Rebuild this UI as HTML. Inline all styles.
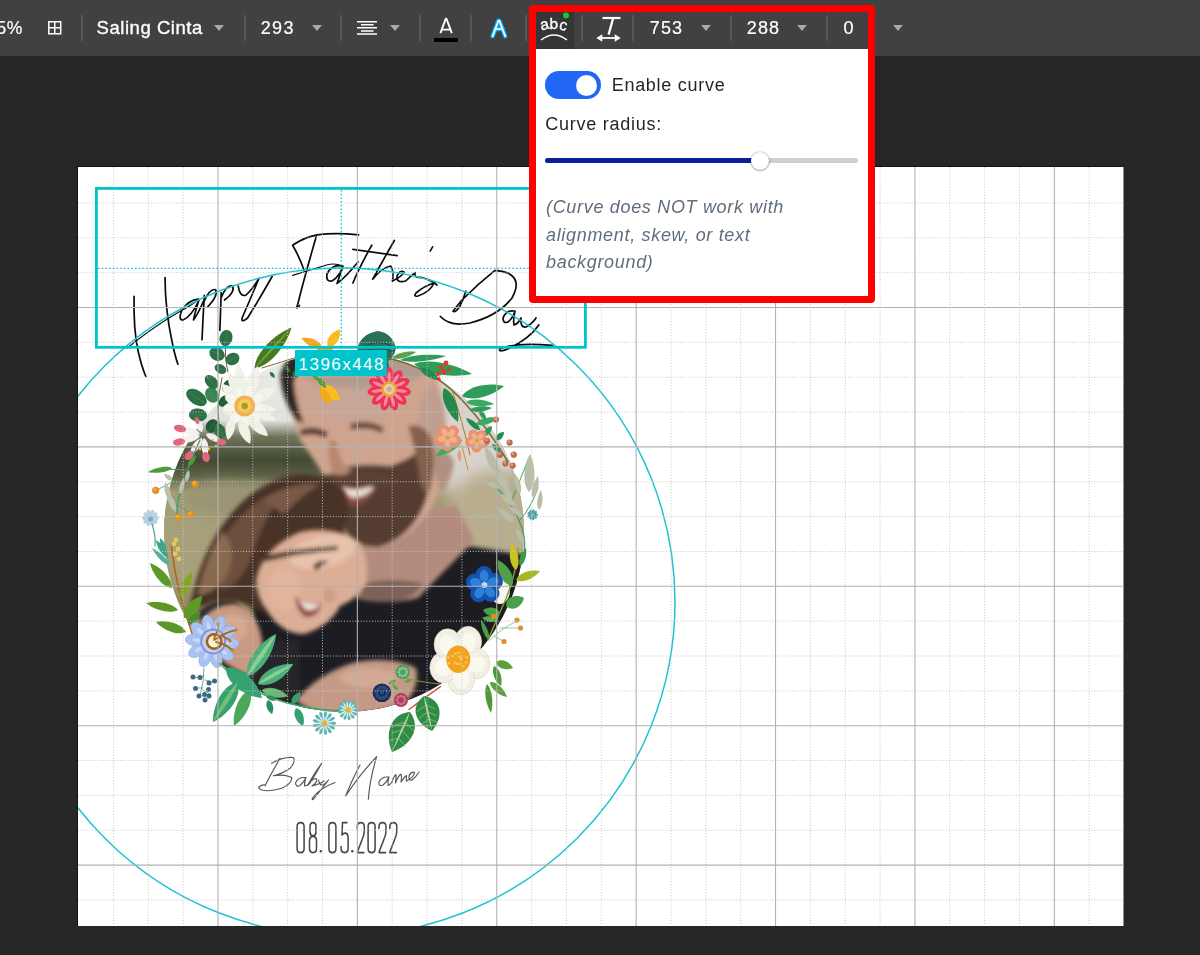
<!DOCTYPE html>
<html><head><meta charset="utf-8"><title>Editor</title>
<style>
*{box-sizing:border-box;margin:0;padding:0}
html,body{width:1200px;height:955px;overflow:hidden;background:#262626;font-family:"Liberation Sans",sans-serif;}
#bar{position:absolute;left:0;top:0;width:1200px;height:56px;background:#414141;color:#fff;box-shadow:inset 0 1px 0 #3d4043;}
#cv{position:absolute;left:0;top:0;}
.gmi{fill:none;stroke:#c6c6c6;stroke-width:1;stroke-dasharray:1 1.8;}
.gma{fill:none;stroke:#b2b2b2;stroke-width:1.1;}
#bar .t{position:absolute;color:#fff;white-space:nowrap;line-height:1;}
#bar .sep{position:absolute;top:15px;width:2px;height:26px;background:#575757;}
#bar .car{position:absolute;top:25px;width:0;height:0;border-left:5.5px solid transparent;border-right:5.5px solid transparent;border-top:6px solid #a9a9a9;}
#bar svg{position:absolute;overflow:visible}
#red{position:absolute;left:529px;top:5px;width:346px;height:298px;border:7px solid #fe0000;border-radius:4px;pointer-events:none;}
#abcbtn{position:absolute;left:536px;top:12px;width:38px;height:37px;background:#363636;}
#pop{position:absolute;left:536px;top:49px;width:332px;height:247px;background:#fff;color:#1d2229;}
#pop .tg{position:absolute;left:9px;top:22px;width:56px;height:28px;border-radius:14px;background:#2166f6;}
#pop .tg i{position:absolute;left:31px;top:3.5px;width:21px;height:21px;border-radius:50%;background:#fff;}
#pop .l1{position:absolute;left:75.7px;top:26px;font-size:18px;letter-spacing:.72px;line-height:21px;white-space:nowrap;color:#1f242b}
#pop .l2{position:absolute;left:9.3px;top:65.2px;font-size:18px;letter-spacing:.75px;line-height:21px;white-space:nowrap;color:#1f242b}
#pop .trk{position:absolute;left:9px;top:109px;width:313px;height:5px;border-radius:3px;background:#cfcfcf;}
#pop .fil{position:absolute;left:9px;top:109px;width:215px;height:5px;border-radius:3px;background:#0a1f9b;}
#pop .knb{position:absolute;left:215px;top:103px;width:18px;height:18px;border-radius:50%;background:#fff;box-shadow:0 0 2px rgba(0,0,0,.45),0 1px 2px rgba(0,0,0,.25);}
#pop .note{position:absolute;left:10px;top:145.4px;font-size:18px;font-style:italic;letter-spacing:.68px;line-height:27.5px;color:#5f6d7c;white-space:nowrap}

#bar .t,#pop .l1,#pop .l2,#pop .note{opacity:.999;will-change:opacity}

</style></head>
<body>
<div id="bar">
<span class="t" style="left:-3.5px;top:19.5px;font-size:17.5px;letter-spacing:.6px;-webkit-text-stroke:.2px #fff">5%</span>
<svg style="left:48px;top:21px" width="14" height="14" viewBox="0 0 14 14"><path d="M.8 .8H12.7V12.7H.8ZM6.75 .8V12.7M.8 6.75H12.7" fill="none" stroke="#fff" stroke-width="1.5"/></svg>
<div class="sep" style="left:81.0px"></div>
<span class="t" style="left:96.5px;top:19px;font-size:18.5px;letter-spacing:.55px;-webkit-text-stroke:.35px #fff">Saling Cinta</span>
<div class="car" style="left:214px"></div>
<div class="sep" style="left:243.5px"></div>
<span class="t" style="left:260.8px;top:19.2px;font-size:18px;letter-spacing:1.3px;-webkit-text-stroke:.2px #fff">293</span>
<div class="car" style="left:311.5px"></div>
<div class="sep" style="left:339.7px"></div>
<svg style="left:357px;top:21px" width="20" height="14" viewBox="0 0 20 14"><path d="M0 .8H20M4 3.8H16.5M0 6.8H20M4 9.9H16.5M0 13H20" fill="none" stroke="#fff" stroke-width="1.5"/></svg>
<div class="car" style="left:390px"></div>
<div class="sep" style="left:419.0px"></div>
<svg style="left:434px;top:17px" width="24" height="26" viewBox="0 0 24 26"><path d="M6.4 16.2L11.7 1.8H12.5L17.8 16.2M8.2 12.6H16" fill="none" stroke="#fff" stroke-width="1.9" stroke-linejoin="round"/><rect x="0" y="21" width="24" height="4" fill="#000"/></svg>
<div class="sep" style="left:470.0px"></div>
<svg style="left:490px;top:19px" width="18" height="20" viewBox="0 0 18 20"><path d="M2.6 17.2L8.4 1.8H9.4L15.2 17.2M5 10H12.8" fill="none" stroke="#10aefa" stroke-width="4.4" stroke-linejoin="round" stroke-linecap="round"/><path d="M2.6 17.2L8.4 1.8H9.4L15.2 17.2M5 10H12.8" fill="none" stroke="#fff" stroke-width="1.7" stroke-linejoin="round" stroke-linecap="round"/></svg>
<div class="sep" style="left:525.0px"></div>
<div class="sep" style="left:580.8px"></div>
<div class="sep" style="left:632.4px"></div>
<div class="sep" style="left:729.7px"></div>
<div class="sep" style="left:825.7px"></div>
<span class="t" style="left:649.8px;top:19.2px;font-size:18px;letter-spacing:1.1px;-webkit-text-stroke:.2px #fff">753</span>
<div class="car" style="left:700.5px"></div>
<span class="t" style="left:746.8px;top:19.2px;font-size:18px;letter-spacing:1.1px;-webkit-text-stroke:.2px #fff">288</span>
<div class="car" style="left:796.5px"></div>
<span class="t" style="left:843.5px;top:19.2px;font-size:18px;-webkit-text-stroke:.2px #fff">0</span>
<div class="car" style="left:893px"></div>

</div>
<svg id="cv" width="1200" height="955" viewBox="0 0 1200 955">
<rect x="77" y="166" width="1046.5" height="760" fill="#141414"/>
<rect x="78" y="167" width="1045.5" height="759" fill="#fff"/>
<g clip-path="url(#cvclip)">
<defs><clipPath id="cvclip"><rect x="78" y="167" width="1045.5" height="759"/></clipPath></defs>
<defs>
<clipPath id="pc"><circle cx="344" cy="532" r="180"/></clipPath>
<filter id="b2" x="-20%" y="-20%" width="140%" height="140%"><feGaussianBlur stdDeviation="2"/></filter>
<filter id="b4" x="-30%" y="-30%" width="160%" height="160%"><feGaussianBlur stdDeviation="4"/></filter>
<filter id="b7" x="-30%" y="-30%" width="160%" height="160%"><feGaussianBlur stdDeviation="7"/></filter>
<filter id="b1" x="-20%" y="-20%" width="140%" height="140%"><feGaussianBlur stdDeviation="1"/></filter>
<linearGradient id="bgl" x1="0" y1="352" x2="0" y2="712" gradientUnits="userSpaceOnUse"><stop offset="0" stop-color="#ececea"/><stop offset=".19" stop-color="#e2e2de"/><stop offset=".235" stop-color="#6f755a"/><stop offset=".3" stop-color="#434a33"/><stop offset=".345" stop-color="#5d6146"/><stop offset=".39" stop-color="#a19a74"/><stop offset=".6" stop-color="#979168"/><stop offset="1" stop-color="#858557"/></linearGradient>
</defs>
<g clip-path="url(#pc)">
<rect x="160" y="348" width="370" height="370" fill="url(#bgl)"/>
<g filter="url(#b7)">
<ellipse cx="470" cy="420" rx="70" ry="75" fill="#d9d2cd"/>
<ellipse cx="495" cy="520" rx="50" ry="50" fill="#b9ad8f"/>
<ellipse cx="190" cy="540" rx="36" ry="50" fill="#a6a07a"/>
<ellipse cx="230" cy="500" rx="50" ry="18" fill="#9a9474"/>
</g>
<g filter="url(#b2)">
<path d="M252 604 L300 612 L330 600 L352 560 L420 560 L462 545 L530 556 L540 730 L250 730 L262 690Z" fill="#1f1f21"/>
<path d="M198 612 Q215 596 236 600 L262 640 L300 640 L300 720 L230 720Z" fill="#27272a"/>
</g>
<g filter="url(#b2)">
<path d="M366 520 L456 505 Q468 525 474 541 Q440 575 418 598 Q385 606 356 598 Q350 570 356 545Z" fill="#b38c7e"/>
<path d="M362 584 Q392 576 424 584 Q412 600 392 602 Q372 602 358 597Z" fill="#7d6258"/>
</g>
<g filter="url(#b2)">
<path d="M288 372 Q300 348 350 346 L420 346 Q446 380 444 430 Q446 470 436 500 Q410 545 372 548 Q348 540 338 500 Q322 470 300 440 Q286 405 288 372Z" fill="#cfa48e"/>
<ellipse cx="350" cy="400" rx="48" ry="22" fill="#c8a594"/><ellipse cx="362" cy="370" rx="64" ry="18" fill="#b39a8f"/>
<ellipse cx="432" cy="430" rx="14" ry="44" fill="#bf9f90"/>
<path d="M280 376 Q284 358 300 350 L314 350 Q296 366 294 384 Q296 404 304 424 L296 420 Q282 400 280 376Z" fill="#2b2523"/>
<path d="M434 452 Q448 448 454 462 Q452 480 442 492 Q434 480 434 452Z" fill="#b0917f"/>
<path d="M336 470 Q356 462 390 466 Q414 458 426 444 Q434 470 426 500 Q412 538 378 547 Q352 548 340 520 Q334 495 336 470Z" fill="#543c31"/>
<path d="M408 426 Q424 422 432 440 Q436 468 430 490 Q424 498 420 480 Q416 450 408 426Z" fill="#84604e"/>
<path d="M340 486 Q358 492 378 482 Q372 504 352 506 Q342 500 340 486Z" fill="#8a4a44"/>
<path d="M342 487 Q358 493 376 484 Q370 496 354 498 Q346 496 342 487Z" fill="#eadfd2"/>
<path d="M320 476 Q350 468 392 474 L390 490 Q356 482 326 490Z" fill="#5a4034"/>
<path d="M300 430 Q312 424 328 432 L326 438 Q312 432 301 436Z" fill="#5a3d30"/>
<path d="M350 424 Q368 418 384 428 L382 433 Q366 426 351 430Z" fill="#6a4a3c"/>
<path d="M330 440 Q326 462 334 474 Q344 478 352 470 Q340 466 336 440Z" fill="#b78770"/>
</g>
<g filter="url(#b2)">
<path d="M190 606 Q196 576 207 552 Q220 524 242 502 Q268 478 300 474 Q330 474 344 492 Q352 520 338 548 Q300 540 282 560 Q268 590 280 622 Q262 612 240 602 Q222 598 204 606Z" fill="#4a3226"/>
<path d="M214 560 Q232 508 286 488 Q262 520 250 560 Q240 584 222 590Z" fill="#6d4f3c"/>
<path d="M258 600 Q262 560 300 540 L290 600 Q276 620 262 614Z" fill="#3a261e"/>
<path d="M198 596 Q202 566 222 532 Q236 544 230 568 Q222 590 198 596Z" fill="#8a6a50"/>
<path d="M262 500 Q290 482 320 484 Q300 496 284 514Z" fill="#7a5a46"/>
</g>
<g filter="url(#b2)">
<path d="M256 580 Q262 548 300 532 Q336 524 360 544 Q370 560 366 584 Q356 600 340 606 Q330 626 304 634 Q282 634 268 612 Q256 598 256 580Z" fill="#dcae96"/>
<ellipse cx="322" cy="552" rx="34" ry="16" fill="#e8c2ac" transform="rotate(-12 322 552)"/>
<ellipse cx="284" cy="590" rx="18" ry="22" fill="#e2b49c"/>
<path d="M262 556 Q300 548 338 546 L338 550 Q300 553 264 562Z" fill="#4a3226"/>
<path d="M295 596 Q308 606 322 603 Q318 618 305 617 Q296 610 295 596Z" fill="#8e3f3f"/>
<path d="M297 598 Q308 606 320 604 Q316 611 306 610Z" fill="#f1e7de"/>
<path d="M313 566 Q320 558 329 562 Q322 564 316 571Z" fill="#3e2a22"/>
<path d="M324 590 Q332 586 337 594 Q334 604 326 603 Q322 598 324 590Z" fill="#cf9c86"/>
</g>
<g filter="url(#b2)">
<path d="M200 624 Q210 604 236 604 Q258 612 262 640 Q262 664 250 676 Q226 668 210 648Z" fill="#c99a82"/>
<ellipse cx="232" cy="628" rx="16" ry="14" fill="#d6a890"/>
<path d="M296 700 Q320 672 356 662 Q392 656 416 668 Q420 684 408 700 Q380 716 340 716 Q310 714 296 700Z" fill="#c49a86"/>
<ellipse cx="368" cy="678" rx="28" ry="10" fill="#d2aa96"/>
</g>
</g>
<path d="M228 372Q224 356 226 340" stroke="#6b5a3a" stroke-width="1" fill="none" stroke-linecap="round"/>
<ellipse cx="217.0" cy="354.0" rx="8.1" ry="6.5" fill="#2e7045" transform="rotate(-150 217.0 354.0)"/>
<path d="M224.0 358.0L210.0 350.0" stroke="#5fa070" stroke-width=".5" fill="none" opacity=".7"/>
<ellipse cx="232.5" cy="359.0" rx="7.2" ry="6.0" fill="#2e7045" transform="rotate(-25 232.5 359.0)"/>
<path d="M226.0 362.0L239.0 356.0" stroke="#5fa070" stroke-width=".5" fill="none" opacity=".7"/>
<ellipse cx="226.0" cy="338.0" rx="8.2" ry="6.5" fill="#2e7045" transform="rotate(-76 226.0 338.0)"/>
<path d="M224.0 346.0L228.0 330.0" stroke="#5fa070" stroke-width=".5" fill="none" opacity=".7"/>
<ellipse cx="220.5" cy="369.0" rx="6.3" ry="4.5" fill="#2e7045" transform="rotate(-151 220.5 369.0)"/>
<path d="M226.0 372.0L215.0 366.0" stroke="#5fa070" stroke-width=".5" fill="none" opacity=".7"/>
<path d="M222 440Q214 410 222 378" stroke="#5a6a3a" stroke-width="1" fill="none" stroke-linecap="round"/>
<ellipse cx="196.5" cy="397.5" rx="11.5" ry="7.0" fill="#2e7045" transform="rotate(-146 196.5 397.5)"/>
<path d="M206.0 404.0L187.0 391.0" stroke="#5fa070" stroke-width=".5" fill="none" opacity=".7"/>
<ellipse cx="212.0" cy="395.0" rx="8.1" ry="6.5" fill="#3b8552" transform="rotate(-120 212.0 395.0)"/>
<path d="M216.0 402.0L208.0 388.0" stroke="#5fa070" stroke-width=".5" fill="none" opacity=".7"/>
<ellipse cx="211.5" cy="382.0" rx="8.1" ry="5.5" fill="#2e7045" transform="rotate(-133 211.5 382.0)"/>
<path d="M217.0 388.0L206.0 376.0" stroke="#5fa070" stroke-width=".5" fill="none" opacity=".7"/>
<ellipse cx="198.0" cy="415.0" rx="9.1" ry="6.5" fill="#2e7045" transform="rotate(-174 198.0 415.0)"/>
<path d="M207.0 416.0L189.0 414.0" stroke="#5fa070" stroke-width=".5" fill="none" opacity=".7"/>
<ellipse cx="212.0" cy="426.0" rx="7.2" ry="6.0" fill="#1f5a38" transform="rotate(124 212.0 426.0)"/>
<path d="M216.0 420.0L208.0 432.0" stroke="#5fa070" stroke-width=".5" fill="none" opacity=".7"/>
<ellipse cx="220.0" cy="431.0" rx="8.1" ry="5.5" fill="#2e7045" transform="rotate(-120 220.0 431.0)"/>
<path d="M224.0 438.0L216.0 424.0" stroke="#5fa070" stroke-width=".5" fill="none" opacity=".7"/>
<ellipse cx="227.0" cy="386.0" rx="6.7" ry="4.0" fill="#1f5a38" transform="rotate(-63 227.0 386.0)"/>
<path d="M224.0 392.0L230.0 380.0" stroke="#5fa070" stroke-width=".5" fill="none" opacity=".7"/>
<ellipse cx="224.0" cy="401.0" rx="6.4" ry="4.5" fill="#1f5a38" transform="rotate(-51 224.0 401.0)"/>
<path d="M220.0 406.0L228.0 396.0" stroke="#5fa070" stroke-width=".5" fill="none" opacity=".7"/>
<path d="M254.5 368.5C270.3 366.4 287.0 344.3 291.5 327.5C275.3 333.7 255.0 352.5 254.5 368.5Z" fill="#457a22"/>
<path d="M254.5 368.5C263.9 360.6 282.1 339.8 291.5 327.5C280.2 338.1 261.4 358.4 254.5 368.5Z" fill="#8ab04a" opacity="0.7"/>
<path d="M262 368Q282 362 300 356" stroke="#7a6a3a" stroke-width="1" fill="none" stroke-linecap="round"/>
<path d="M270.0 372.0C269.0 375.1 272.0 377.7 275.0 378.0C275.2 375.0 273.2 371.6 270.0 372.0Z" fill="#2f7a3a"/>
<path d="M285.0 366.0C284.0 369.1 287.0 371.7 290.0 372.0C290.2 369.0 288.2 365.6 285.0 366.0Z" fill="#2f7a3a"/>
<path d="M293.0 372.0C292.0 375.1 295.0 377.7 298.0 378.0C298.2 375.0 296.2 371.6 293.0 372.0Z" fill="#2f7a3a"/>
<path d="M300.0 362.0C299.0 365.1 302.0 367.7 305.0 368.0C305.2 365.0 303.2 361.6 300.0 362.0Z" fill="#2f7a3a"/>
<path d="M242.0 400.0C250.0 391.1 245.9 373.3 238.0 364.0C232.3 374.8 232.2 393.1 242.0 400.0Z" fill="#f2f3e8"/>
<path d="M246.0 400.0C257.1 395.5 261.1 377.8 258.0 366.0C248.2 373.2 240.2 389.5 246.0 400.0Z" fill="#f2f3e8"/>
<path d="M250.0 402.0C260.0 406.8 272.0 397.9 276.0 388.0C265.5 385.9 251.5 391.0 250.0 402.0Z" fill="#f2f3e8"/>
<path d="M238.0 402.0C240.7 392.5 231.2 384.9 222.0 384.0C221.8 393.2 228.3 403.5 238.0 402.0Z" fill="#f2f3e8"/>
<path d="M236.0 408.0C230.5 400.3 224.0 404.3 222.0 412.0C227.8 417.4 235.4 417.5 236.0 408.0Z" fill="#f2f3e8"/>
<path d="M252.0 408.0C256.6 416.0 268.8 415.2 276.0 410.0C269.8 403.7 257.9 400.9 252.0 408.0Z" fill="#f2f3e8"/>
<path d="M240.0 398.0C243.6 389.4 236.1 377.1 228.0 372.0C226.6 381.5 231.1 395.2 240.0 398.0Z" fill="#f2f3e8"/>
<ellipse cx="258.7" cy="406.0" rx="8.0" ry="5.5" fill="#f6f6ee" stroke="#dfe2d2" stroke-width=".5" transform="rotate(10 244.7 406.0)"/>
<ellipse cx="258.7" cy="406.0" rx="8.0" ry="5.5" fill="#f6f6ee" stroke="#dfe2d2" stroke-width=".5" transform="rotate(50 244.7 406.0)"/>
<ellipse cx="258.7" cy="406.0" rx="8.0" ry="5.5" fill="#f6f6ee" stroke="#dfe2d2" stroke-width=".5" transform="rotate(90 244.7 406.0)"/>
<ellipse cx="258.7" cy="406.0" rx="8.0" ry="5.5" fill="#f6f6ee" stroke="#dfe2d2" stroke-width=".5" transform="rotate(130 244.7 406.0)"/>
<ellipse cx="258.7" cy="406.0" rx="8.0" ry="5.5" fill="#f6f6ee" stroke="#dfe2d2" stroke-width=".5" transform="rotate(170 244.7 406.0)"/>
<ellipse cx="258.7" cy="406.0" rx="8.0" ry="5.5" fill="#f6f6ee" stroke="#dfe2d2" stroke-width=".5" transform="rotate(210 244.7 406.0)"/>
<ellipse cx="258.7" cy="406.0" rx="8.0" ry="5.5" fill="#f6f6ee" stroke="#dfe2d2" stroke-width=".5" transform="rotate(250 244.7 406.0)"/>
<ellipse cx="258.7" cy="406.0" rx="8.0" ry="5.5" fill="#f6f6ee" stroke="#dfe2d2" stroke-width=".5" transform="rotate(290 244.7 406.0)"/>
<ellipse cx="258.7" cy="406.0" rx="8.0" ry="5.5" fill="#f6f6ee" stroke="#dfe2d2" stroke-width=".5" transform="rotate(330 244.7 406.0)"/>
<path d="M248.0 418.0C247.3 427.6 258.5 435.3 268.0 436.0C266.3 426.7 257.5 416.3 248.0 418.0Z" fill="#f1f2e6"/>
<path d="M240.0 420.0C235.2 428.2 241.9 439.5 250.0 444.0C252.5 435.1 249.2 422.4 240.0 420.0Z" fill="#f1f2e6"/>
<path d="M256.0 412.0C258.1 419.5 268.6 422.1 276.0 420.0C272.2 413.4 262.7 408.0 256.0 412.0Z" fill="#f1f2e6"/>
<path d="M232.0 418.0C224.3 421.6 224.0 432.9 228.0 440.0C234.3 434.8 237.9 424.1 232.0 418.0Z" fill="#f1f2e6"/>
<circle cx="244.7" cy="406.0" r="10.5" fill="#f2b050"/>
<circle cx="244.7" cy="406.0" r="7" fill="#f6c95a"/>
<circle cx="244.7" cy="406.0" r="3.2" fill="#a0a020"/>
<path d="M200.0 434.0C196.5 427.6 185.2 425.8 178.0 428.0C183.1 433.5 193.8 437.7 200.0 434.0Z" fill="#f4f1ee"/>
<path d="M200.0 436.0C193.4 432.2 181.8 436.4 176.0 442.0C183.7 444.2 196.0 442.4 200.0 436.0Z" fill="#f4f1ee"/>
<path d="M202.0 438.0C195.1 438.7 190.1 447.9 190.0 455.0C196.6 452.5 203.6 444.8 202.0 438.0Z" fill="#f6eef0"/>
<path d="M204.0 438.0C199.2 442.9 201.5 452.8 206.0 458.0C209.4 452.0 209.7 441.9 204.0 438.0Z" fill="#f6eef0"/>
<path d="M206.0 434.0C207.4 440.1 215.9 443.0 222.0 442.0C219.2 436.5 211.7 431.4 206.0 434.0Z" fill="#f4f1ee"/>
<path d="M202.0 432.0C205.1 427.0 201.1 420.5 196.0 418.0C194.3 423.4 196.2 430.8 202.0 432.0Z" fill="#f2f2ee"/>
<ellipse cx="180.0" cy="428.5" rx="6.2" ry="3.6" fill="#ea6480" transform="rotate(-166 180.0 428.5)"/>
<path d="M186.0 430.0L174.0 427.0" stroke="#5fa070" stroke-width=".5" fill="none" opacity=".7"/>
<ellipse cx="179.0" cy="442.0" rx="6.1" ry="3.6" fill="#ea6480" transform="rotate(171 179.0 442.0)"/>
<path d="M185.0 441.0L173.0 443.0" stroke="#5fa070" stroke-width=".5" fill="none" opacity=".7"/>
<ellipse cx="189.5" cy="455.5" rx="5.7" ry="3.8" fill="#ea6480" transform="rotate(142 189.5 455.5)"/>
<path d="M194.0 452.0L185.0 459.0" stroke="#5fa070" stroke-width=".5" fill="none" opacity=".7"/>
<ellipse cx="206.0" cy="457.0" rx="5.1" ry="3.8" fill="#ea6480" transform="rotate(79 206.0 457.0)"/>
<path d="M205.0 452.0L207.0 462.0" stroke="#5fa070" stroke-width=".5" fill="none" opacity=".7"/>
<ellipse cx="221.5" cy="442.0" rx="4.6" ry="3.2" fill="#ea6480" transform="rotate(13 221.5 442.0)"/>
<path d="M217.0 441.0L226.0 443.0" stroke="#5fa070" stroke-width=".5" fill="none" opacity=".7"/>
<ellipse cx="197.0" cy="420.5" rx="3.6" ry="2.2" fill="#ea6480" transform="rotate(-106 197.0 420.5)"/>
<path d="M198.0 424.0L196.0 417.0" stroke="#5fa070" stroke-width=".5" fill="none" opacity=".7"/>
<circle cx="213.0" cy="440.0" r="1.2" fill="#f0d020"/>
<circle cx="216.0" cy="446.0" r="1.2" fill="#f0d020"/>
<circle cx="209.0" cy="449.0" r="1.2" fill="#f0d020"/>
<circle cx="200.0" cy="449.0" r="1.2" fill="#f0d020"/>
<circle cx="194.0" cy="447.0" r="1.2" fill="#f0d020"/>
<path d="M200 440Q186 470 178 500Q176 510 178 518" stroke="#3f9a6a" stroke-width="1.3" fill="none" stroke-linecap="round"/>
<path d="M186 470Q170 468 150 472" stroke="#3f9a6a" stroke-width="1" fill="none" stroke-linecap="round"/>
<path d="M180 490L194 485" stroke="#3f9a6a" stroke-width="0.8" fill="none" stroke-linecap="round"/>
<path d="M176 480L157 490" stroke="#3f9a6a" stroke-width="0.8" fill="none" stroke-linecap="round"/>
<path d="M178 505L190 513" stroke="#3f9a6a" stroke-width="0.8" fill="none" stroke-linecap="round"/>
<path d="M172.0 468.0C166.1 465.1 154.2 468.0 148.0 472.0C155.2 473.8 167.4 472.7 172.0 468.0Z" fill="#4f9a3a"/>
<path d="M188.0 466.0C192.5 466.0 195.8 460.4 196.0 456.0C191.7 457.2 187.1 461.6 188.0 466.0Z" fill="#4f9a3a"/>
<path d="M172.0 480.0C172.3 475.9 167.8 473.6 164.0 474.0C164.7 477.8 168.2 481.4 172.0 480.0Z" fill="#b9c2ae"/>
<path d="M170.0 500.0C172.9 494.9 169.4 486.2 165.0 482.0C163.4 487.9 164.9 497.1 170.0 500.0Z" fill="#b9c2ae"/>
<path d="M176.0 512.0C177.8 505.3 171.9 494.8 166.0 490.0C165.7 497.6 169.8 509.0 176.0 512.0Z" fill="#b9c2ae"/>
<path d="M180.0 494.0C184.2 491.3 185.4 483.1 184.0 478.0C180.3 481.8 177.5 489.6 180.0 494.0Z" fill="#b9c2ae"/>
<path d="M186.0 482.0C189.6 480.1 190.4 473.9 189.0 470.0C185.9 472.8 183.7 478.6 186.0 482.0Z" fill="#b9c2ae"/>
<circle cx="155.7" cy="490.3" r="3.6" fill="#e2901e"/>
<circle cx="154.9" cy="489.5" r="1.5" fill="#f0ad3a"/>
<circle cx="194.9" cy="484.0" r="3.6" fill="#e2901e"/>
<circle cx="194.1" cy="483.2" r="1.5" fill="#f0ad3a"/>
<circle cx="178.3" cy="517.0" r="3.6" fill="#e2901e"/>
<circle cx="177.5" cy="516.2" r="1.5" fill="#f0ad3a"/>
<circle cx="190.9" cy="514.4" r="3.6" fill="#e2901e"/>
<circle cx="190.1" cy="513.6" r="1.5" fill="#f0ad3a"/>
<ellipse cx="155.2" cy="518.0" rx="3.8" ry="2.0" fill="#b5d2e6" transform="rotate(0 150.5 518.0)"/>
<ellipse cx="155.2" cy="518.0" rx="3.8" ry="2.0" fill="#b5d2e6" transform="rotate(36 150.5 518.0)"/>
<ellipse cx="155.2" cy="518.0" rx="3.8" ry="2.0" fill="#b5d2e6" transform="rotate(72 150.5 518.0)"/>
<ellipse cx="155.2" cy="518.0" rx="3.8" ry="2.0" fill="#b5d2e6" transform="rotate(108 150.5 518.0)"/>
<ellipse cx="155.2" cy="518.0" rx="3.8" ry="2.0" fill="#b5d2e6" transform="rotate(144 150.5 518.0)"/>
<ellipse cx="155.2" cy="518.0" rx="3.8" ry="2.0" fill="#b5d2e6" transform="rotate(180 150.5 518.0)"/>
<ellipse cx="155.2" cy="518.0" rx="3.8" ry="2.0" fill="#b5d2e6" transform="rotate(216 150.5 518.0)"/>
<ellipse cx="155.2" cy="518.0" rx="3.8" ry="2.0" fill="#b5d2e6" transform="rotate(252 150.5 518.0)"/>
<ellipse cx="155.2" cy="518.0" rx="3.8" ry="2.0" fill="#b5d2e6" transform="rotate(288 150.5 518.0)"/>
<ellipse cx="155.2" cy="518.0" rx="3.8" ry="2.0" fill="#b5d2e6" transform="rotate(324 150.5 518.0)"/>
<circle cx="150.5" cy="519.0" r="2.5" fill="#8aa6c0"/>
<path d="M152 524Q156 536 155 546" stroke="#4aa88a" stroke-width="1.2" fill="none" stroke-linecap="round"/>
<path d="M322.0 347.0C319.8 339.7 309.0 336.5 301.5 338.0C305.5 344.6 315.2 350.3 322.0 347.0Z" fill="#f4a81a"/>
<path d="M328.0 347.0C336.6 347.2 341.1 337.5 340.0 329.5C332.1 331.3 324.7 339.1 328.0 347.0Z" fill="#f7bd1e"/>
<path d="M316.0 349.0C320.0 352.4 329.0 351.6 334.0 349.0C329.0 346.4 320.0 345.6 316.0 349.0Z" fill="#f0a818"/>
<path d="M321.0 386.0C319.9 396.3 330.6 401.6 340.0 400.0C338.7 390.6 330.5 381.9 321.0 386.0Z" fill="#f7c01e"/>
<path d="M320.0 388.0C317.3 395.0 324.0 402.2 331.0 404.0C331.8 396.8 327.5 388.0 320.0 388.0Z" fill="#f2a818"/>
<path d="M318.0 378.0C316.5 382.8 321.3 387.2 326.0 388.0C326.2 383.2 323.0 377.6 318.0 378.0Z" fill="#5a9a3a"/>
<path d="M312 374Q318 380 322 386" stroke="#5a9a3a" stroke-width="1" fill="none" stroke-linecap="round"/>
<path d="M318.0 380.0C319.4 376.2 315.8 372.7 312.0 372.0C311.6 375.8 313.9 380.3 318.0 380.0Z" fill="#4a9a3a"/>
<path d="M357 350Q360 334 378 331Q392 333 396 348Q394 358 388 361L390 372L380 366Q372 364 357 350Z" fill="#2a6f5a"/>
<path d="M362 348Q376 338 392 346M364 352Q378 344 392 352" stroke="#1b4d40" stroke-width=".9" fill="none"/>
<path d="M386 358Q430 366 462 400Q490 430 508 462" stroke="#7a6a30" stroke-width="1.6" fill="none" stroke-linecap="round"/>
<path d="M452 390Q462 420 470 455" stroke="#a08020" stroke-width="1" fill="none" stroke-linecap="round"/>
<path d="M392.0 358.0C398.3 360.7 410.0 356.7 416.0 352.0C408.5 350.6 396.3 352.7 392.0 358.0Z" fill="#5aa050"/>
<path d="M400.0 360.0C410.5 363.9 433.4 360.8 446.0 356.0C432.8 353.5 409.7 354.3 400.0 360.0Z" fill="#2f9c5a"/>
<path d="M414.0 364.0C425.2 375.0 454.6 377.9 472.0 374.0C456.9 364.5 428.3 357.4 414.0 364.0Z" fill="#2f9c5a"/>
<path d="M420.0 368.0C421.6 375.4 432.2 380.2 440.0 380.0C436.6 373.0 427.2 365.9 420.0 368.0Z" fill="#238a4c"/>
<path d="M444.0 388.0C439.4 398.6 448.3 414.9 458.0 422.0C459.9 410.1 454.7 392.3 444.0 388.0Z" fill="#238a4c"/>
<path d="M462.0 396.0C473.3 402.5 493.8 395.4 504.0 386.0C490.7 382.2 469.2 385.1 462.0 396.0Z" fill="#2f9c5a"/>
<path d="M466.0 402.0C471.8 407.3 485.9 407.1 494.0 404.0C486.4 399.8 472.5 397.6 466.0 402.0Z" fill="#3aa866"/>
<path d="M470.0 410.0C475.2 413.7 486.1 411.7 492.0 408.0C485.6 405.4 474.5 405.4 470.0 410.0Z" fill="#2f9c5a"/>
<path d="M476.0 424.0C482.1 427.3 492.8 423.2 498.0 418.0C490.9 416.1 479.6 418.0 476.0 424.0Z" fill="#3aa866"/>
<path d="M480.0 430.0C479.6 424.2 472.0 419.0 466.0 418.0C467.9 423.8 474.2 430.5 480.0 430.0Z" fill="#238a4c"/>
<path d="M462.0 440.0C453.0 438.2 440.8 447.5 436.0 456.0C445.8 455.5 459.5 448.8 462.0 440.0Z" fill="#3aa866"/>
<path d="M484.0 436.0C489.0 436.4 492.2 430.8 492.0 426.0C487.3 426.8 482.5 431.2 484.0 436.0Z" fill="#2f9c5a"/>
<path d="M496.0 440.0C500.7 441.2 504.0 436.5 504.0 432.0C499.5 432.0 494.8 435.3 496.0 440.0Z" fill="#238a4c"/>
<path d="M500.0 452.0C500.7 447.8 496.1 444.4 492.0 444.0C492.4 448.1 495.8 452.7 500.0 452.0Z" fill="#2f9c5a"/>
<path d="M486.0 420.0C487.1 415.4 482.4 409.9 478.0 408.0C478.1 412.8 481.4 419.3 486.0 420.0Z" fill="#2f9c5a"/>
<path d="M438 380Q442 370 446 364" stroke="#d04030" stroke-width="0.8" fill="none" stroke-linecap="round"/>
<circle cx="446.0" cy="363.0" r="2.4" fill="#e8342a"/>
<circle cx="441.0" cy="367.0" r="2.2" fill="#e8342a"/>
<circle cx="444.0" cy="372.0" r="2.4" fill="#e8342a"/>
<circle cx="438.0" cy="374.0" r="2" fill="#e8342a"/>
<circle cx="439.0" cy="379.0" r="1.8" fill="#e8342a"/>
<circle cx="449.0" cy="369.0" r="1.8" fill="#e8342a"/>
<ellipse cx="402.7" cy="389.2" rx="8.5" ry="4.6" fill="#ef3355" transform="rotate(8 389.2 389.2)"/>
<ellipse cx="402.7" cy="389.2" rx="8.5" ry="4.6" fill="#ef3355" transform="rotate(41 389.2 389.2)"/>
<ellipse cx="402.7" cy="389.2" rx="8.5" ry="4.6" fill="#ef3355" transform="rotate(73 389.2 389.2)"/>
<ellipse cx="402.7" cy="389.2" rx="8.5" ry="4.6" fill="#ef3355" transform="rotate(106 389.2 389.2)"/>
<ellipse cx="402.7" cy="389.2" rx="8.5" ry="4.6" fill="#ef3355" transform="rotate(139 389.2 389.2)"/>
<ellipse cx="402.7" cy="389.2" rx="8.5" ry="4.6" fill="#ef3355" transform="rotate(172 389.2 389.2)"/>
<ellipse cx="402.7" cy="389.2" rx="8.5" ry="4.6" fill="#ef3355" transform="rotate(204 389.2 389.2)"/>
<ellipse cx="402.7" cy="389.2" rx="8.5" ry="4.6" fill="#ef3355" transform="rotate(237 389.2 389.2)"/>
<ellipse cx="402.7" cy="389.2" rx="8.5" ry="4.6" fill="#ef3355" transform="rotate(270 389.2 389.2)"/>
<ellipse cx="402.7" cy="389.2" rx="8.5" ry="4.6" fill="#ef3355" transform="rotate(303 389.2 389.2)"/>
<ellipse cx="402.7" cy="389.2" rx="8.5" ry="4.6" fill="#ef3355" transform="rotate(335 389.2 389.2)"/>
<ellipse cx="401.2" cy="389.2" rx="6.0" ry="1.6" fill="#f78aa0" transform="rotate(8 389.2 389.2)"/>
<ellipse cx="401.2" cy="389.2" rx="6.0" ry="1.6" fill="#f78aa0" transform="rotate(41 389.2 389.2)"/>
<ellipse cx="401.2" cy="389.2" rx="6.0" ry="1.6" fill="#f78aa0" transform="rotate(73 389.2 389.2)"/>
<ellipse cx="401.2" cy="389.2" rx="6.0" ry="1.6" fill="#f78aa0" transform="rotate(106 389.2 389.2)"/>
<ellipse cx="401.2" cy="389.2" rx="6.0" ry="1.6" fill="#f78aa0" transform="rotate(139 389.2 389.2)"/>
<ellipse cx="401.2" cy="389.2" rx="6.0" ry="1.6" fill="#f78aa0" transform="rotate(172 389.2 389.2)"/>
<ellipse cx="401.2" cy="389.2" rx="6.0" ry="1.6" fill="#f78aa0" transform="rotate(204 389.2 389.2)"/>
<ellipse cx="401.2" cy="389.2" rx="6.0" ry="1.6" fill="#f78aa0" transform="rotate(237 389.2 389.2)"/>
<ellipse cx="401.2" cy="389.2" rx="6.0" ry="1.6" fill="#f78aa0" transform="rotate(270 389.2 389.2)"/>
<ellipse cx="401.2" cy="389.2" rx="6.0" ry="1.6" fill="#f78aa0" transform="rotate(303 389.2 389.2)"/>
<ellipse cx="401.2" cy="389.2" rx="6.0" ry="1.6" fill="#f78aa0" transform="rotate(335 389.2 389.2)"/>
<circle cx="389.2" cy="389.2" r="8" fill="#e8a52c"/>
<circle cx="389.2" cy="389.2" r="5.5" fill="#e6cfa8"/>
<circle cx="389.2" cy="389.2" r="2.5" fill="#c9ae8a"/>
<ellipse cx="455.8" cy="437.4" rx="6.0" ry="5.9" fill="#e9926e" transform="rotate(-50 447.8 437.4)"/>
<ellipse cx="455.8" cy="437.4" rx="6.0" ry="5.9" fill="#e9926e" transform="rotate(22 447.8 437.4)"/>
<ellipse cx="455.8" cy="437.4" rx="6.0" ry="5.9" fill="#e9926e" transform="rotate(94 447.8 437.4)"/>
<ellipse cx="455.8" cy="437.4" rx="6.0" ry="5.9" fill="#e9926e" transform="rotate(166 447.8 437.4)"/>
<ellipse cx="455.8" cy="437.4" rx="6.0" ry="5.9" fill="#e9926e" transform="rotate(238 447.8 437.4)"/>
<ellipse cx="453.7" cy="437.4" rx="3.9" ry="2.8" fill="#f2b092" transform="rotate(-50 447.8 437.4)"/>
<ellipse cx="453.7" cy="437.4" rx="3.9" ry="2.8" fill="#f2b092" transform="rotate(22 447.8 437.4)"/>
<ellipse cx="453.7" cy="437.4" rx="3.9" ry="2.8" fill="#f2b092" transform="rotate(94 447.8 437.4)"/>
<ellipse cx="453.7" cy="437.4" rx="3.9" ry="2.8" fill="#f2b092" transform="rotate(166 447.8 437.4)"/>
<ellipse cx="453.7" cy="437.4" rx="3.9" ry="2.8" fill="#f2b092" transform="rotate(238 447.8 437.4)"/>
<circle cx="447.8" cy="437.4" r="2" fill="#d8a020"/>
<ellipse cx="484.0" cy="440.5" rx="5.0" ry="5.0" fill="#e9926e" transform="rotate(-50 477.0 440.5)"/>
<ellipse cx="484.0" cy="440.5" rx="5.0" ry="5.0" fill="#e9926e" transform="rotate(22 477.0 440.5)"/>
<ellipse cx="484.0" cy="440.5" rx="5.0" ry="5.0" fill="#e9926e" transform="rotate(94 477.0 440.5)"/>
<ellipse cx="484.0" cy="440.5" rx="5.0" ry="5.0" fill="#e9926e" transform="rotate(166 477.0 440.5)"/>
<ellipse cx="484.0" cy="440.5" rx="5.0" ry="5.0" fill="#e9926e" transform="rotate(238 477.0 440.5)"/>
<ellipse cx="482.2" cy="440.5" rx="3.2" ry="2.4" fill="#f2b092" transform="rotate(-50 477.0 440.5)"/>
<ellipse cx="482.2" cy="440.5" rx="3.2" ry="2.4" fill="#f2b092" transform="rotate(22 477.0 440.5)"/>
<ellipse cx="482.2" cy="440.5" rx="3.2" ry="2.4" fill="#f2b092" transform="rotate(94 477.0 440.5)"/>
<ellipse cx="482.2" cy="440.5" rx="3.2" ry="2.4" fill="#f2b092" transform="rotate(166 477.0 440.5)"/>
<ellipse cx="482.2" cy="440.5" rx="3.2" ry="2.4" fill="#f2b092" transform="rotate(238 477.0 440.5)"/>
<circle cx="477.0" cy="440.5" r="2" fill="#d8a020"/>
<path d="M459.0 450.0C456.2 452.9 457.4 458.8 460.0 462.0C462.0 458.4 462.2 452.4 459.0 450.0Z" fill="#e9a080"/>
<path d="M462 446L468 470" stroke="#b08a30" stroke-width="0.8" fill="none" stroke-linecap="round"/>
<circle cx="496.0" cy="419.6" r="3.1" fill="#bf6a48"/>
<circle cx="495.2" cy="418.6" r="1.3" fill="#e0a088"/>
<circle cx="509.6" cy="442.6" r="3.1" fill="#bf6a48"/>
<circle cx="508.8" cy="441.6" r="1.3" fill="#e0a088"/>
<circle cx="500.0" cy="455.0" r="3.1" fill="#bf6a48"/>
<circle cx="499.2" cy="454.0" r="1.3" fill="#e0a088"/>
<circle cx="513.8" cy="454.7" r="3.1" fill="#bf6a48"/>
<circle cx="513.0" cy="453.7" r="1.3" fill="#e0a088"/>
<circle cx="505.4" cy="463.5" r="3.1" fill="#bf6a48"/>
<circle cx="504.6" cy="462.5" r="1.3" fill="#e0a088"/>
<circle cx="512.7" cy="465.6" r="3.1" fill="#bf6a48"/>
<circle cx="511.9" cy="464.6" r="1.3" fill="#e0a088"/>
<circle cx="487.0" cy="441.0" r="3.1" fill="#bf6a48"/>
<circle cx="486.2" cy="440.0" r="1.3" fill="#e0a088"/>
<path d="M490 482Q512 500 522 528Q526 540 524 552" stroke="#3fa060" stroke-width="1.3" fill="none" stroke-linecap="round"/>
<path d="M512 500Q520 480 528 460" stroke="#3fa060" stroke-width="1" fill="none" stroke-linecap="round"/>
<path d="M520 520Q532 506 538 488" stroke="#3fa060" stroke-width="1" fill="none" stroke-linecap="round"/>
<path d="M498.0 474.0C500.9 465.3 493.0 452.5 485.0 447.0C484.3 456.7 489.4 470.8 498.0 474.0Z" fill="#b9bea8"/>
<path d="M508.0 492.0C510.6 483.0 502.2 469.7 494.0 464.0C493.6 474.0 499.2 488.7 508.0 492.0Z" fill="#b9bea8"/>
<path d="M500.0 488.0C498.4 483.1 491.1 481.0 486.0 482.0C488.8 486.4 495.4 490.2 500.0 488.0Z" fill="#b9bea8"/>
<path d="M516.0 506.0C515.3 499.6 506.6 494.5 500.0 494.0C502.3 500.2 509.7 507.1 516.0 506.0Z" fill="#b9bea8"/>
<path d="M529.0 492.0C536.8 483.8 535.5 464.8 530.0 454.0C523.9 464.5 521.6 483.4 529.0 492.0Z" fill="#b9bea8"/>
<path d="M533.0 498.0C538.4 494.1 539.9 482.9 538.0 476.0C533.3 481.4 529.8 492.2 533.0 498.0Z" fill="#b9bea8"/>
<path d="M539.0 510.0C543.3 506.0 543.4 495.9 541.0 490.0C537.5 495.3 535.6 505.2 539.0 510.0Z" fill="#b9bea8"/>
<path d="M514.0 522.0C513.6 515.4 504.8 509.2 498.0 508.0C500.1 514.6 507.4 522.5 514.0 522.0Z" fill="#b9bea8"/>
<path d="M524.0 544.0C525.7 538.8 520.9 531.2 516.0 528.0C515.6 533.8 518.8 542.2 524.0 544.0Z" fill="#b9bea8"/>
<path d="M520.0 494.0C523.2 488.5 519.7 478.8 515.0 474.0C513.1 480.4 514.6 490.7 520.0 494.0Z" fill="#b9bea8"/>
<path d="M512.0 500.0C513.6 494.5 508.3 486.9 503.0 484.0C502.8 490.0 506.4 498.5 512.0 500.0Z" fill="#b9bea8"/>
<path d="M522.0 516.0C521.0 510.9 513.5 506.6 508.0 506.0C510.3 511.0 516.8 516.7 522.0 516.0Z" fill="#b9bea8"/>
<ellipse cx="535.6" cy="514.8" rx="2.5" ry="1.4" fill="#3fa3bc" transform="rotate(0 532.6 514.8)"/>
<ellipse cx="535.6" cy="514.8" rx="2.5" ry="1.4" fill="#3fa3bc" transform="rotate(40 532.6 514.8)"/>
<ellipse cx="535.6" cy="514.8" rx="2.5" ry="1.4" fill="#3fa3bc" transform="rotate(80 532.6 514.8)"/>
<ellipse cx="535.6" cy="514.8" rx="2.5" ry="1.4" fill="#3fa3bc" transform="rotate(120 532.6 514.8)"/>
<ellipse cx="535.6" cy="514.8" rx="2.5" ry="1.4" fill="#3fa3bc" transform="rotate(160 532.6 514.8)"/>
<ellipse cx="535.6" cy="514.8" rx="2.5" ry="1.4" fill="#3fa3bc" transform="rotate(200 532.6 514.8)"/>
<ellipse cx="535.6" cy="514.8" rx="2.5" ry="1.4" fill="#3fa3bc" transform="rotate(240 532.6 514.8)"/>
<ellipse cx="535.6" cy="514.8" rx="2.5" ry="1.4" fill="#3fa3bc" transform="rotate(280 532.6 514.8)"/>
<ellipse cx="535.6" cy="514.8" rx="2.5" ry="1.4" fill="#3fa3bc" transform="rotate(320 532.6 514.8)"/>
<circle cx="532.6" cy="514.8" r="1.6" fill="#e0b020"/>
<path d="M171.4 546Q176 590 192.3 634" stroke="#b5601c" stroke-width="1.6" fill="none" stroke-linecap="round"/>
<path d="M168.0 558.0C168.8 551.7 162.0 543.3 156.0 540.0C156.7 546.8 161.9 556.3 168.0 558.0Z" fill="#3aa888"/>
<path d="M166.0 552.0C167.7 547.6 164.0 540.9 160.0 538.0C159.4 542.9 161.6 550.2 166.0 552.0Z" fill="#3aa888"/>
<path d="M170.0 566.0C168.6 559.5 159.0 551.1 152.0 548.0C155.1 555.0 163.5 564.6 170.0 566.0Z" fill="#58b09a"/>
<path d="M172.0 588.0C172.3 577.9 160.1 566.5 150.0 563.0C152.2 573.5 162.0 587.1 172.0 588.0Z" fill="#5a9a28"/>
<path d="M180.0 598.0C188.3 594.9 192.9 581.3 192.0 572.0C184.3 577.3 177.0 589.7 180.0 598.0Z" fill="#86a622"/>
<path d="M178.0 610.0C172.3 602.4 156.0 600.3 146.0 603.0C154.0 609.6 169.6 614.5 178.0 610.0Z" fill="#5c9822"/>
<path d="M184.0 618.0C194.4 618.4 201.8 606.1 202.0 596.0C192.1 598.2 181.6 607.9 184.0 618.0Z" fill="#5e9a26"/>
<path d="M186.0 632.0C181.6 623.3 166.1 619.8 156.0 622.0C162.7 629.8 177.2 636.3 186.0 632.0Z" fill="#5a962a"/>
<path d="M188.0 624.0C194.5 625.3 199.6 618.3 200.0 612.0C193.7 612.4 186.7 617.5 188.0 624.0Z" fill="#4a8a2a"/>
<circle cx="174.0" cy="544.0" r="2.4" fill="#e6c65a"/>
<circle cx="178.0" cy="549.0" r="2.4" fill="#e6c65a"/>
<circle cx="175.0" cy="554.0" r="2.4" fill="#e6c65a"/>
<circle cx="179.0" cy="559.0" r="2.4" fill="#e6c65a"/>
<circle cx="176.0" cy="540.0" r="2.4" fill="#e6c65a"/>
<ellipse cx="228.7" cy="641.5" rx="10.5" ry="6.0" fill="#a9c2f2" stroke="#8aa2dc" stroke-width=".5" transform="rotate(5 212.2 641.5)"/>
<ellipse cx="228.7" cy="641.5" rx="10.5" ry="6.0" fill="#a9c2f2" stroke="#8aa2dc" stroke-width=".5" transform="rotate(41 212.2 641.5)"/>
<ellipse cx="228.7" cy="641.5" rx="10.5" ry="6.0" fill="#a9c2f2" stroke="#8aa2dc" stroke-width=".5" transform="rotate(77 212.2 641.5)"/>
<ellipse cx="228.7" cy="641.5" rx="10.5" ry="6.0" fill="#a9c2f2" stroke="#8aa2dc" stroke-width=".5" transform="rotate(113 212.2 641.5)"/>
<ellipse cx="228.7" cy="641.5" rx="10.5" ry="6.0" fill="#a9c2f2" stroke="#8aa2dc" stroke-width=".5" transform="rotate(149 212.2 641.5)"/>
<ellipse cx="228.7" cy="641.5" rx="10.5" ry="6.0" fill="#a9c2f2" stroke="#8aa2dc" stroke-width=".5" transform="rotate(185 212.2 641.5)"/>
<ellipse cx="228.7" cy="641.5" rx="10.5" ry="6.0" fill="#a9c2f2" stroke="#8aa2dc" stroke-width=".5" transform="rotate(221 212.2 641.5)"/>
<ellipse cx="228.7" cy="641.5" rx="10.5" ry="6.0" fill="#a9c2f2" stroke="#8aa2dc" stroke-width=".5" transform="rotate(257 212.2 641.5)"/>
<ellipse cx="228.7" cy="641.5" rx="10.5" ry="6.0" fill="#a9c2f2" stroke="#8aa2dc" stroke-width=".5" transform="rotate(293 212.2 641.5)"/>
<ellipse cx="228.7" cy="641.5" rx="10.5" ry="6.0" fill="#a9c2f2" stroke="#8aa2dc" stroke-width=".5" transform="rotate(329 212.2 641.5)"/>
<ellipse cx="224.7" cy="641.5" rx="7.5" ry="2.0" fill="#c8d8f8" transform="rotate(5 212.2 641.5)"/>
<ellipse cx="224.7" cy="641.5" rx="7.5" ry="2.0" fill="#c8d8f8" transform="rotate(41 212.2 641.5)"/>
<ellipse cx="224.7" cy="641.5" rx="7.5" ry="2.0" fill="#c8d8f8" transform="rotate(77 212.2 641.5)"/>
<ellipse cx="224.7" cy="641.5" rx="7.5" ry="2.0" fill="#c8d8f8" transform="rotate(113 212.2 641.5)"/>
<ellipse cx="224.7" cy="641.5" rx="7.5" ry="2.0" fill="#c8d8f8" transform="rotate(149 212.2 641.5)"/>
<ellipse cx="224.7" cy="641.5" rx="7.5" ry="2.0" fill="#c8d8f8" transform="rotate(185 212.2 641.5)"/>
<ellipse cx="224.7" cy="641.5" rx="7.5" ry="2.0" fill="#c8d8f8" transform="rotate(221 212.2 641.5)"/>
<ellipse cx="224.7" cy="641.5" rx="7.5" ry="2.0" fill="#c8d8f8" transform="rotate(257 212.2 641.5)"/>
<ellipse cx="224.7" cy="641.5" rx="7.5" ry="2.0" fill="#c8d8f8" transform="rotate(293 212.2 641.5)"/>
<ellipse cx="224.7" cy="641.5" rx="7.5" ry="2.0" fill="#c8d8f8" transform="rotate(329 212.2 641.5)"/>
<circle cx="213.2" cy="641.5" r="13" fill="#7f92d6"/>
<circle cx="213.2" cy="641.5" r="11" fill="#c5d0f0"/>
<circle cx="214.2" cy="641.5" r="8.5" fill="#a0601a"/>
<circle cx="214.2" cy="641.5" r="6" fill="#f5efd8"/>
<path d="M214 640Q226 632 236 630M216 642Q226 644 232 650M214 638Q220 628 218 624M222 636L230 640" stroke="#a8681a" stroke-width="1.8" fill="none" stroke-linecap="round"/>
<circle cx="236.0" cy="630.0" r="1.8" fill="#c08428"/>
<circle cx="232.0" cy="650.0" r="1.8" fill="#c08428"/>
<circle cx="218.0" cy="624.0" r="1.8" fill="#c08428"/>
<circle cx="230.0" cy="641.0" r="1.8" fill="#c08428"/>
<path d="M204 668Q204 682 200 696M204 676L194 678M205 680L214 682M203 688L196 688M203 690L210 694" stroke="#3f8a6a" stroke-width="0.7" fill="none" stroke-linecap="round"/>
<circle cx="193.0" cy="677.0" r="2.5" fill="#3a6a82"/>
<circle cx="200.0" cy="677.5" r="2.5" fill="#3a6a82"/>
<circle cx="209.0" cy="683.0" r="2.5" fill="#3a6a82"/>
<circle cx="214.5" cy="681.0" r="2.5" fill="#3a6a82"/>
<circle cx="195.5" cy="688.5" r="2.5" fill="#3a6a82"/>
<circle cx="208.5" cy="689.5" r="2.5" fill="#3a6a82"/>
<circle cx="199.0" cy="696.0" r="2.5" fill="#3a6a82"/>
<circle cx="204.5" cy="694.5" r="2.5" fill="#3a6a82"/>
<circle cx="209.0" cy="696.0" r="2.5" fill="#3a6a82"/>
<circle cx="205.0" cy="700.0" r="2.5" fill="#3a6a82"/>
<path d="M219.6 663.5Q250 696 300 706Q330 712 349 709.6" stroke="#3fa868" stroke-width="1.4" fill="none" stroke-linecap="round"/>
<path d="M238.0 682.0C222.6 684.6 212.4 706.1 213.0 722.0C227.6 715.5 242.4 697.0 238.0 682.0Z" fill="#35a070"/>
<path d="M250.0 690.0C238.3 694.3 232.2 713.1 234.0 726.0C244.7 718.7 254.7 701.6 250.0 690.0Z" fill="#4aa85c"/>
<path d="M226.0 668.0C226.0 684.1 245.9 696.9 262.0 698.0C258.0 682.3 241.9 665.1 226.0 668.0Z" fill="#35a070"/>
<path d="M247.0 676.0C262.5 673.0 274.8 650.5 276.0 634.0C261.0 641.0 244.3 660.5 247.0 676.0Z" fill="#49b07c"/>
<path d="M258.0 684.0C270.8 688.6 287.1 676.4 293.0 664.0C279.3 662.8 260.6 670.6 258.0 684.0Z" fill="#49b07c"/>
<path d="M262.0 690.0C266.2 698.0 279.5 699.4 288.0 696.0C281.9 689.2 269.3 684.6 262.0 690.0Z" fill="#6ab878"/>
<path d="M268.0 700.0C264.2 704.4 267.3 711.1 272.0 714.0C274.4 709.1 273.5 701.8 268.0 700.0Z" fill="#2a9060"/>
<path d="M292.0 704.0C297.8 704.0 300.8 697.4 300.0 692.0C294.7 693.3 289.7 698.7 292.0 704.0Z" fill="#35a070"/>
<path d="M296.0 708.0C291.8 714.2 296.6 722.7 303.0 726.0C305.4 719.2 303.3 709.7 296.0 708.0Z" fill="#35a070"/>
<path d="M276.0 700.0C275.1 695.9 269.8 694.7 266.0 696.0C267.8 699.6 272.5 702.3 276.0 700.0Z" fill="#2a9060"/>
<path d="M238.0 682.0C229.6 689.0 217.8 709.4 213.0 722.0C222.2 712.2 235.4 692.6 238.0 682.0Z" fill="#8acc7a" opacity="0.7"/>
<path d="M247.0 676.0C256.2 668.7 270.0 647.3 276.0 634.0C265.7 644.3 250.5 664.8 247.0 676.0Z" fill="#a8dc9a" opacity="0.7"/>
<path d="M258.0 684.0C267.1 682.0 284.2 671.4 293.0 664.0C282.2 667.8 264.3 677.2 258.0 684.0Z" fill="#a8dc9a" opacity="0.7"/>
<ellipse cx="331.3" cy="723.2" rx="5.0" ry="1.7" fill="#5fb4b6" transform="rotate(0 324.3 723.2)"/>
<ellipse cx="331.3" cy="723.2" rx="5.0" ry="1.7" fill="#5fb4b6" transform="rotate(28 324.3 723.2)"/>
<ellipse cx="331.3" cy="723.2" rx="5.0" ry="1.7" fill="#5fb4b6" transform="rotate(55 324.3 723.2)"/>
<ellipse cx="331.3" cy="723.2" rx="5.0" ry="1.7" fill="#5fb4b6" transform="rotate(83 324.3 723.2)"/>
<ellipse cx="331.3" cy="723.2" rx="5.0" ry="1.7" fill="#5fb4b6" transform="rotate(111 324.3 723.2)"/>
<ellipse cx="331.3" cy="723.2" rx="5.0" ry="1.7" fill="#5fb4b6" transform="rotate(138 324.3 723.2)"/>
<ellipse cx="331.3" cy="723.2" rx="5.0" ry="1.7" fill="#5fb4b6" transform="rotate(166 324.3 723.2)"/>
<ellipse cx="331.3" cy="723.2" rx="5.0" ry="1.7" fill="#5fb4b6" transform="rotate(194 324.3 723.2)"/>
<ellipse cx="331.3" cy="723.2" rx="5.0" ry="1.7" fill="#5fb4b6" transform="rotate(222 324.3 723.2)"/>
<ellipse cx="331.3" cy="723.2" rx="5.0" ry="1.7" fill="#5fb4b6" transform="rotate(249 324.3 723.2)"/>
<ellipse cx="331.3" cy="723.2" rx="5.0" ry="1.7" fill="#5fb4b6" transform="rotate(277 324.3 723.2)"/>
<ellipse cx="331.3" cy="723.2" rx="5.0" ry="1.7" fill="#5fb4b6" transform="rotate(305 324.3 723.2)"/>
<ellipse cx="331.3" cy="723.2" rx="5.0" ry="1.7" fill="#5fb4b6" transform="rotate(332 324.3 723.2)"/>
<ellipse cx="330.1" cy="723.2" rx="3.8" ry="0.8" fill="#d8f0f0" transform="rotate(14 324.3 723.2)"/>
<ellipse cx="330.1" cy="723.2" rx="3.8" ry="0.8" fill="#d8f0f0" transform="rotate(42 324.3 723.2)"/>
<ellipse cx="330.1" cy="723.2" rx="3.8" ry="0.8" fill="#d8f0f0" transform="rotate(69 324.3 723.2)"/>
<ellipse cx="330.1" cy="723.2" rx="3.8" ry="0.8" fill="#d8f0f0" transform="rotate(97 324.3 723.2)"/>
<ellipse cx="330.1" cy="723.2" rx="3.8" ry="0.8" fill="#d8f0f0" transform="rotate(125 324.3 723.2)"/>
<ellipse cx="330.1" cy="723.2" rx="3.8" ry="0.8" fill="#d8f0f0" transform="rotate(152 324.3 723.2)"/>
<ellipse cx="330.1" cy="723.2" rx="3.8" ry="0.8" fill="#d8f0f0" transform="rotate(180 324.3 723.2)"/>
<ellipse cx="330.1" cy="723.2" rx="3.8" ry="0.8" fill="#d8f0f0" transform="rotate(208 324.3 723.2)"/>
<ellipse cx="330.1" cy="723.2" rx="3.8" ry="0.8" fill="#d8f0f0" transform="rotate(236 324.3 723.2)"/>
<ellipse cx="330.1" cy="723.2" rx="3.8" ry="0.8" fill="#d8f0f0" transform="rotate(263 324.3 723.2)"/>
<ellipse cx="330.1" cy="723.2" rx="3.8" ry="0.8" fill="#d8f0f0" transform="rotate(291 324.3 723.2)"/>
<ellipse cx="330.1" cy="723.2" rx="3.8" ry="0.8" fill="#d8f0f0" transform="rotate(319 324.3 723.2)"/>
<ellipse cx="330.1" cy="723.2" rx="3.8" ry="0.8" fill="#d8f0f0" transform="rotate(346 324.3 723.2)"/>
<circle cx="324.3" cy="723.2" r="2.8" fill="#e8b820"/>
<ellipse cx="354.2" cy="710.0" rx="4.2" ry="1.7" fill="#5fb4b6" transform="rotate(0 348.0 710.0)"/>
<ellipse cx="354.2" cy="710.0" rx="4.2" ry="1.7" fill="#5fb4b6" transform="rotate(28 348.0 710.0)"/>
<ellipse cx="354.2" cy="710.0" rx="4.2" ry="1.7" fill="#5fb4b6" transform="rotate(55 348.0 710.0)"/>
<ellipse cx="354.2" cy="710.0" rx="4.2" ry="1.7" fill="#5fb4b6" transform="rotate(83 348.0 710.0)"/>
<ellipse cx="354.2" cy="710.0" rx="4.2" ry="1.7" fill="#5fb4b6" transform="rotate(111 348.0 710.0)"/>
<ellipse cx="354.2" cy="710.0" rx="4.2" ry="1.7" fill="#5fb4b6" transform="rotate(138 348.0 710.0)"/>
<ellipse cx="354.2" cy="710.0" rx="4.2" ry="1.7" fill="#5fb4b6" transform="rotate(166 348.0 710.0)"/>
<ellipse cx="354.2" cy="710.0" rx="4.2" ry="1.7" fill="#5fb4b6" transform="rotate(194 348.0 710.0)"/>
<ellipse cx="354.2" cy="710.0" rx="4.2" ry="1.7" fill="#5fb4b6" transform="rotate(222 348.0 710.0)"/>
<ellipse cx="354.2" cy="710.0" rx="4.2" ry="1.7" fill="#5fb4b6" transform="rotate(249 348.0 710.0)"/>
<ellipse cx="354.2" cy="710.0" rx="4.2" ry="1.7" fill="#5fb4b6" transform="rotate(277 348.0 710.0)"/>
<ellipse cx="354.2" cy="710.0" rx="4.2" ry="1.7" fill="#5fb4b6" transform="rotate(305 348.0 710.0)"/>
<ellipse cx="354.2" cy="710.0" rx="4.2" ry="1.7" fill="#5fb4b6" transform="rotate(332 348.0 710.0)"/>
<ellipse cx="353.2" cy="710.0" rx="3.2" ry="0.8" fill="#d8f0f0" transform="rotate(14 348.0 710.0)"/>
<ellipse cx="353.2" cy="710.0" rx="3.2" ry="0.8" fill="#d8f0f0" transform="rotate(42 348.0 710.0)"/>
<ellipse cx="353.2" cy="710.0" rx="3.2" ry="0.8" fill="#d8f0f0" transform="rotate(69 348.0 710.0)"/>
<ellipse cx="353.2" cy="710.0" rx="3.2" ry="0.8" fill="#d8f0f0" transform="rotate(97 348.0 710.0)"/>
<ellipse cx="353.2" cy="710.0" rx="3.2" ry="0.8" fill="#d8f0f0" transform="rotate(125 348.0 710.0)"/>
<ellipse cx="353.2" cy="710.0" rx="3.2" ry="0.8" fill="#d8f0f0" transform="rotate(152 348.0 710.0)"/>
<ellipse cx="353.2" cy="710.0" rx="3.2" ry="0.8" fill="#d8f0f0" transform="rotate(180 348.0 710.0)"/>
<ellipse cx="353.2" cy="710.0" rx="3.2" ry="0.8" fill="#d8f0f0" transform="rotate(208 348.0 710.0)"/>
<ellipse cx="353.2" cy="710.0" rx="3.2" ry="0.8" fill="#d8f0f0" transform="rotate(236 348.0 710.0)"/>
<ellipse cx="353.2" cy="710.0" rx="3.2" ry="0.8" fill="#d8f0f0" transform="rotate(263 348.0 710.0)"/>
<ellipse cx="353.2" cy="710.0" rx="3.2" ry="0.8" fill="#d8f0f0" transform="rotate(291 348.0 710.0)"/>
<ellipse cx="353.2" cy="710.0" rx="3.2" ry="0.8" fill="#d8f0f0" transform="rotate(319 348.0 710.0)"/>
<ellipse cx="353.2" cy="710.0" rx="3.2" ry="0.8" fill="#d8f0f0" transform="rotate(346 348.0 710.0)"/>
<circle cx="348.0" cy="710.0" r="2.8" fill="#e8b820"/>
<ellipse cx="500" cy="590" rx="10" ry="14" fill="#f6f5f0"/>
<path d="M518 548Q516 580 500 612Q494 626 488 640" stroke="#8aa020" stroke-width="1.4" fill="none" stroke-linecap="round"/>
<path d="M516.0 570.0C521.3 563.3 517.8 550.6 512.0 544.0C508.4 552.0 509.0 565.2 516.0 570.0Z" fill="#c9c41e"/>
<path d="M516.0 580.0C523.5 583.8 534.9 577.9 540.0 571.0C531.6 569.1 519.1 572.2 516.0 580.0Z" fill="#a8b626"/>
<path d="M512.0 586.0C516.2 576.4 507.5 564.3 498.0 560.0C496.4 570.3 501.6 584.2 512.0 586.0Z" fill="#4fa048"/>
<path d="M520.0 566.0C525.2 563.3 527.3 554.0 526.0 548.0C521.3 552.0 517.4 560.7 520.0 566.0Z" fill="#3a9a4a"/>
<path d="M506.0 606.0C513.6 612.4 521.7 606.5 524.0 598.0C516.2 594.0 506.3 596.0 506.0 606.0Z" fill="#4aa04a"/>
<path d="M500.0 614.0C497.8 606.4 489.0 606.0 483.0 610.0C486.6 616.2 494.7 619.8 500.0 614.0Z" fill="#4aa04a"/>
<path d="M497.0 620.0C494.2 615.5 486.6 615.4 482.0 618.0C485.8 621.7 493.2 623.7 497.0 620.0Z" fill="#58a850"/>
<path d="M489.0 640.0C490.4 634.3 485.7 624.6 481.0 620.0C480.8 626.6 484.0 636.9 489.0 640.0Z" fill="#4aa04a"/>
<path d="M496.0 662.0C497.7 669.2 506.7 670.8 513.0 668.0C509.8 661.9 501.8 657.5 496.0 662.0Z" fill="#5aa03c"/>
<path d="M494.0 666.0C490.6 672.1 495.3 681.7 501.0 686.0C502.8 679.1 500.5 668.7 494.0 666.0Z" fill="#4f9a38"/>
<path d="M490.0 682.0C490.3 689.2 499.6 695.8 507.0 697.0C504.9 689.8 497.2 681.4 490.0 682.0Z" fill="#5aa03c"/>
<path d="M487.0 684.0C483.1 691.0 486.2 705.4 491.0 713.0C493.5 704.4 492.7 689.7 487.0 684.0Z" fill="#4f9a38"/>
<path d="M490 640Q504 626 520 620M500 628L520.5 628M494 636L504 641.5" stroke="#6ab07a" stroke-width="0.7" fill="none" stroke-linecap="round"/>
<circle cx="493.9" cy="616.4" r="2.6" fill="#e0902a"/>
<circle cx="516.9" cy="620.0" r="2.6" fill="#e0902a"/>
<circle cx="520.5" cy="628.0" r="2.6" fill="#e0902a"/>
<circle cx="504.0" cy="641.5" r="2.6" fill="#e0902a"/>
<ellipse cx="495.0" cy="585.0" rx="8.5" ry="8.5" fill="#1552b0" transform="rotate(-20 484.5 585.0)"/>
<ellipse cx="495.0" cy="585.0" rx="8.5" ry="8.5" fill="#1552b0" transform="rotate(52 484.5 585.0)"/>
<ellipse cx="495.0" cy="585.0" rx="8.5" ry="8.5" fill="#1552b0" transform="rotate(124 484.5 585.0)"/>
<ellipse cx="495.0" cy="585.0" rx="8.5" ry="8.5" fill="#1552b0" transform="rotate(196 484.5 585.0)"/>
<ellipse cx="495.0" cy="585.0" rx="8.5" ry="8.5" fill="#1552b0" transform="rotate(268 484.5 585.0)"/>
<ellipse cx="493.5" cy="585.0" rx="6.0" ry="4.5" fill="#2f7fd6" transform="rotate(-20 484.5 585.0)"/>
<ellipse cx="493.5" cy="585.0" rx="6.0" ry="4.5" fill="#2f7fd6" transform="rotate(52 484.5 585.0)"/>
<ellipse cx="493.5" cy="585.0" rx="6.0" ry="4.5" fill="#2f7fd6" transform="rotate(124 484.5 585.0)"/>
<ellipse cx="493.5" cy="585.0" rx="6.0" ry="4.5" fill="#2f7fd6" transform="rotate(196 484.5 585.0)"/>
<ellipse cx="493.5" cy="585.0" rx="6.0" ry="4.5" fill="#2f7fd6" transform="rotate(268 484.5 585.0)"/>
<circle cx="484.5" cy="585.0" r="3" fill="#bcdcf4"/>
<g transform="translate(459.3 659.3) scale(1 1.15) translate(-459.3 -659.3)">
<ellipse cx="476.8" cy="659.3" rx="13.5" ry="13.5" fill="#f1f0e3" stroke="#d6d6c2" stroke-width=".5" transform="rotate(-60 459.3 659.3)"/>
<ellipse cx="476.8" cy="659.3" rx="13.5" ry="13.5" fill="#f1f0e3" stroke="#d6d6c2" stroke-width=".5" transform="rotate(12 459.3 659.3)"/>
<ellipse cx="476.8" cy="659.3" rx="13.5" ry="13.5" fill="#f1f0e3" stroke="#d6d6c2" stroke-width=".5" transform="rotate(84 459.3 659.3)"/>
<ellipse cx="476.8" cy="659.3" rx="13.5" ry="13.5" fill="#f1f0e3" stroke="#d6d6c2" stroke-width=".5" transform="rotate(156 459.3 659.3)"/>
<ellipse cx="476.8" cy="659.3" rx="13.5" ry="13.5" fill="#f1f0e3" stroke="#d6d6c2" stroke-width=".5" transform="rotate(228 459.3 659.3)"/>
<ellipse cx="475.3" cy="659.3" rx="10.0" ry="8.0" fill="#faf9f0" transform="rotate(-60 459.3 659.3)"/>
<ellipse cx="475.3" cy="659.3" rx="10.0" ry="8.0" fill="#faf9f0" transform="rotate(12 459.3 659.3)"/>
<ellipse cx="475.3" cy="659.3" rx="10.0" ry="8.0" fill="#faf9f0" transform="rotate(84 459.3 659.3)"/>
<ellipse cx="475.3" cy="659.3" rx="10.0" ry="8.0" fill="#faf9f0" transform="rotate(156 459.3 659.3)"/>
<ellipse cx="475.3" cy="659.3" rx="10.0" ry="8.0" fill="#faf9f0" transform="rotate(228 459.3 659.3)"/>
<circle cx="458.3" cy="659.3" r="12" fill="#f4a21c"/>
</g>
<circle cx="461.3" cy="659.3" r="1.3" fill="#f8c84a"/>
<circle cx="454.8" cy="662.5" r="1.3" fill="#f8c84a"/>
<circle cx="458.9" cy="652.7" r="1.3" fill="#f8c84a"/>
<circle cx="463.4" cy="666.0" r="1.3" fill="#f8c84a"/>
<circle cx="448.3" cy="657.5" r="1.3" fill="#f8c84a"/>
<circle cx="460.8" cy="657.7" r="1.3" fill="#f8c84a"/>
<circle cx="457.1" cy="663.9" r="1.3" fill="#f8c84a"/>
<circle cx="455.3" cy="653.4" r="1.3" fill="#f8c84a"/>
<circle cx="466.2" cy="662.2" r="1.3" fill="#f8c84a"/>
<circle cx="448.9" cy="663.2" r="1.3" fill="#f8c84a"/>
<circle cx="459.6" cy="656.6" r="1.3" fill="#f8c84a"/>
<circle cx="459.7" cy="663.9" r="1.3" fill="#f8c84a"/>
<circle cx="452.6" cy="656.0" r="1.3" fill="#f8c84a"/>
<circle cx="466.5" cy="657.5" r="1.3" fill="#f8c84a"/>
<path d="M440.5 686.6Q424 698 409 709.6" stroke="#c8503a" stroke-width="1.3" fill="none" stroke-linecap="round"/>
<path d="M440 684Q420 682 404 678" stroke="#7a9a3a" stroke-width="1" fill="none" stroke-linecap="round"/>
<circle cx="381.9" cy="692.8" r="9.3" fill="#1b2c52"/>
<circle cx="387.4" cy="692.8" r="2" fill="#2d4a80"/>
<circle cx="386.3" cy="696.0" r="2" fill="#2d4a80"/>
<circle cx="383.6" cy="698.0" r="2" fill="#2d4a80"/>
<circle cx="380.2" cy="698.0" r="2" fill="#2d4a80"/>
<circle cx="377.4" cy="696.0" r="2" fill="#2d4a80"/>
<circle cx="376.4" cy="692.8" r="2" fill="#2d4a80"/>
<circle cx="377.5" cy="689.5" r="2" fill="#2d4a80"/>
<circle cx="380.3" cy="687.5" r="2" fill="#2d4a80"/>
<circle cx="383.7" cy="687.6" r="2" fill="#2d4a80"/>
<circle cx="386.4" cy="689.6" r="2" fill="#2d4a80"/>
<circle cx="381.9" cy="692.8" r="2" fill="#2d4a80"/>
<circle cx="401.0" cy="700.0" r="7" fill="#a83c58"/>
<circle cx="405.0" cy="700.0" r="1.6" fill="#d0708a"/>
<circle cx="403.8" cy="702.8" r="1.6" fill="#d0708a"/>
<circle cx="401.0" cy="704.0" r="1.6" fill="#d0708a"/>
<circle cx="398.2" cy="702.8" r="1.6" fill="#d0708a"/>
<circle cx="397.0" cy="700.0" r="1.6" fill="#d0708a"/>
<circle cx="398.2" cy="697.2" r="1.6" fill="#d0708a"/>
<circle cx="401.0" cy="696.0" r="1.6" fill="#d0708a"/>
<circle cx="403.8" cy="697.2" r="1.6" fill="#d0708a"/>
<circle cx="402.8" cy="672.0" r="7.2" fill="#4a9a6a"/>
<circle cx="406.8" cy="672.0" r="1.6" fill="#8ac878"/>
<circle cx="405.6" cy="674.8" r="1.6" fill="#8ac878"/>
<circle cx="402.8" cy="676.0" r="1.6" fill="#8ac878"/>
<circle cx="400.0" cy="674.8" r="1.6" fill="#8ac878"/>
<circle cx="398.8" cy="672.0" r="1.6" fill="#8ac878"/>
<circle cx="400.0" cy="669.2" r="1.6" fill="#8ac878"/>
<circle cx="402.8" cy="668.0" r="1.6" fill="#8ac878"/>
<circle cx="405.6" cy="669.2" r="1.6" fill="#8ac878"/>
<path d="M396.0 680.0C393.1 678.7 389.4 681.2 388.0 684.0C391.1 684.6 395.4 683.1 396.0 680.0Z" fill="#5aa84a"/>
<path d="M404.0 682.0C406.4 684.0 410.2 682.4 412.0 680.0C409.3 678.7 405.2 679.2 404.0 682.0Z" fill="#5aa84a"/>
<path d="M398.0 690.0C398.4 686.9 395.0 684.3 392.0 684.0C392.3 687.0 394.9 690.4 398.0 690.0Z" fill="#5aa84a"/>
<path d="M424.0 696.0C408.3 707.7 416.5 724.2 432.0 731.0C443.1 718.2 443.2 699.7 424.0 696.0Z" fill="#2f8c44"/>
<path d="M410.0 712.0C389.7 713.4 384.6 735.2 392.0 752.0C409.5 746.4 422.4 728.2 410.0 712.0Z" fill="#2f8c44"/>
<path d="M424.0 696.0C424.4 704.0 428.7 721.4 432.0 731.0C430.8 721.0 427.1 703.4 424.0 696.0Z" fill="#b8dca0"/>
<path d="M410.0 712.0C404.8 720.2 396.1 740.4 392.0 752.0C398.0 741.2 407.3 721.4 410.0 712.0Z" fill="#b8dca0"/>
<path d="M426.0 704.8L417.0 711.8" stroke="#9ccc8a" stroke-width="0.7" fill="none"/>
<path d="M426.0 704.8L435.0 708.8" stroke="#9ccc8a" stroke-width="0.7" fill="none"/>
<path d="M405.5 722.0L395.5 725.0" stroke="#9ccc8a" stroke-width="0.7" fill="none"/>
<path d="M405.5 722.0L413.5 731.0" stroke="#9ccc8a" stroke-width="0.7" fill="none"/>
<path d="M427.6 711.8L418.6 718.8" stroke="#9ccc8a" stroke-width="0.7" fill="none"/>
<path d="M427.6 711.8L436.6 715.8" stroke="#9ccc8a" stroke-width="0.7" fill="none"/>
<path d="M401.9 730.0L391.9 733.0" stroke="#9ccc8a" stroke-width="0.7" fill="none"/>
<path d="M401.9 730.0L409.9 739.0" stroke="#9ccc8a" stroke-width="0.7" fill="none"/>
<path d="M429.2 718.8L420.2 725.8" stroke="#9ccc8a" stroke-width="0.7" fill="none"/>
<path d="M429.2 718.8L438.2 722.8" stroke="#9ccc8a" stroke-width="0.7" fill="none"/>
<path d="M398.3 738.0L388.3 741.0" stroke="#9ccc8a" stroke-width="0.7" fill="none"/>
<path d="M398.3 738.0L406.3 747.0" stroke="#9ccc8a" stroke-width="0.7" fill="none"/>
<g fill="none" stroke="#565656" stroke-width="1.15" stroke-linecap="round" stroke-linejoin="round">
<path d="M280 758.3Q272 772 265 785.8"/>
<path d="M271.7 763.3Q283 756.5 293.3 757.5Q296 762 290 768.3Q282 774 273.3 775.8Q284 774 291.7 777.5Q292 784 281.7 788.3Q270 792 261.7 790Q257.5 788 259.2 786.7Q262 784.5 265 785"/>
<path d="M305 777.5Q298 777 295.5 783Q296 787.5 300 785.5Q304 782 306 777.5Q304 783 304.5 786Q307 786 310 783"/>
<path d="M310 783Q317 772 321.7 763.3Q313 775 308 785Q312 779 316 778.5Q319 781 312 786Q320 784 324 781"/>
<path d="M318.6 780Q319.5 786 323.3 785Q326 783 328.5 780Q321 790 314 798.5Q311.5 801 312.5 798Q320 788 335 782.5"/>
<path d="M360 765Q351 782 345.8 795.8Q360 774 376.7 756.7Q370 778 368.3 799.2"/>
<path d="M388 777Q381 776.5 378.8 782.5Q379 787 383 785Q387 782 389 777Q387.5 782 388 785.5Q390 785 392 782"/>
<path d="M392 782Q394 776 396 774.5Q396.5 778 395.5 783Q398 776 401 774Q402 777 401 782Q404 777 406.5 775.5Q406 779 406.5 781"/>
<path d="M406.5 781Q414 777 414.5 772.5Q411.5 771 409 776Q408.5 781 412 780Q416 777 419 772"/>
</g>
<g fill="none" stroke="#474747" stroke-width="1.75" stroke-linejoin="round">
<path transform="translate(297.1 822.6) scale(.875 1)" d="M0 4.2Q0 0 4 0Q8 0 8 4.2V25.8Q8 30 4 30Q0 30 0 25.8Z"/>
<path transform="translate(309.5 822.6) scale(.875 1)" d="M4 0Q7.4 0 7.4 3.8V9.5Q7.4 13 4 13.6Q.6 13 .6 9.5V3.8Q.6 0 4 0M4 13.6Q8 14.2 8 18V26Q8 30 4 30Q0 30 0 26V18Q0 14.2 4 13.6"/>
<circle cx="320.8" cy="851.3" r="1.2" fill="#474747" stroke="none"/>
<path transform="translate(328.9 822.6) scale(.875 1)" d="M0 4.2Q0 0 4 0Q8 0 8 4.2V25.8Q8 30 4 30Q0 30 0 25.8Z"/>
<path transform="translate(341.1 822.6) scale(.875 1)" d="M7.4 0H1.6L1 12.4Q2.8 10.6 4.4 10.6Q8 10.6 8 15V26Q8 30 4 30Q0 30 0 26V23.5"/>
<circle cx="352.3" cy="851.3" r="1.2" fill="#474747" stroke="none"/>
<path transform="translate(357.3 822.6) scale(.875 1)" d="M0 6.5V4Q0 0 4 0Q8 0 8 4V8.5Q8 12.5 5.5 17L.2 29V30H8.2"/>
<path transform="translate(368.1 822.6) scale(.875 1)" d="M0 4.2Q0 0 4 0Q8 0 8 4.2V25.8Q8 30 4 30Q0 30 0 25.8Z"/>
<path transform="translate(379.0 822.6) scale(.875 1)" d="M0 6.5V4Q0 0 4 0Q8 0 8 4V8.5Q8 12.5 5.5 17L.2 29V30H8.2"/>
<path transform="translate(389.8 822.6) scale(.875 1)" d="M0 6.5V4Q0 0 4 0Q8 0 8 4V8.5Q8 12.5 5.5 17L.2 29V30H8.2"/>
</g>
<g fill="none" stroke="#0b0b0b" stroke-width="1.7" stroke-linecap="round" stroke-linejoin="round">
<!-- H -->
<path d="M134.1 296.3Q133.3 330 138.3 352Q141.5 366 145.8 376.5"/>
<path d="M165 277.5Q165.2 310 172.2 342.5Q175 356 177.9 364.2"/>
<path d="M127 348.2Q160 322 185.4 308.6Q195 303 198.6 299.2" stroke-width="1.1"/>
<!-- a -->
<path d="M198.6 299.2Q188 300 181.5 311Q178 320 183 320Q192 316 199 300Q195 312 193.5 320Q198 314 203.5 301"/>
<!-- p p -->
<path d="M204.3 295.4Q203 318 202 339.7M204.3 301Q210 288 215.6 289.7Q218.5 296 207.5 307"/>
<path d="M221.2 292.6Q220.5 312 219.9 330.3M221.5 297Q227 284 232.5 286Q235.5 292 224.5 300"/>
<!-- y -->
<path d="M238.2 286Q239.5 296.5 245.7 295.4Q252 290 258.9 278.4Q250 300 242.5 317Q240 324 247.6 318Q260 298 272.1 276.5"/>
<!-- F -->
<path d="M303.9 269.7Q299 256 292.6 245.2Q305 237 317.1 234.9Q335 232.5 358.6 234.9"/>
<path d="M316.2 236.8Q305 275 297.8 304Q295 311 299.5 305.5"/>
<path d="M292.6 275.4Q310 270 326.6 265Q335 262.5 342 266" stroke-width="1.1"/>
<!-- a -->
<path d="M342 266Q332 264 327 274Q325.5 282 332 281Q340 276 343 266Q339 278 337 283.5Q346 277 358 262"/>
<!-- t -->
<path d="M371.8 245.2Q360 266 352.9 283M352.9 249.4L397.2 255.6"/>
<!-- h -->
<path d="M394.4 240.5Q382 262 372.7 279.2Q382 267.5 390.6 266Q394 270 392.5 281"/>
<!-- e r -->
<path d="M392.5 281Q402 276.5 404 272Q400 269.5 397 276Q396 283.5 405.7 281Q411 276 415 272.6Q414 278.5 420.5 277.3"/>
<!-- 's -->
<path d="M432.6 246.8L430.2 251.2" stroke-width="1.6"/>
<path d="M420.5 277.3Q430 279 437 285M434 283Q430 292 418 296Q413 297 416 293Q424 286 434 283"/>
<!-- D -->
<path d="M440.4 316.5Q450 327 470 323Q498 316 512 298Q522 280 508.2 273.3Q500 270 494.7 270.7Q478 284 462 300Q454 309.5 453.1 311.4Q455.5 313 460 306Q464 298 465.8 291"/>
<!-- a y -->
<path d="M514 311Q506 310 503 318Q503 324 508 322Q513 318 515 311Q513 320 514 325Q518 324 521 318Q520 328 526 327Q532 324 536 318"/>
<path d="M538.8 325Q530 338 510 348Q498 353 499.7 349Q515 342 552.3 345.4"/>
</g>

<circle cx="341" cy="602" r="334" fill="none" stroke="#1fc3d0" stroke-width="1.5"/>
<path d="M113.40 167V926M148.25 167V926M183.10 167V926M252.80 167V926M287.65 167V926M322.50 167V926M392.20 167V926M427.05 167V926M461.90 167V926M531.60 167V926M566.45 167V926M601.30 167V926M671.00 167V926M705.85 167V926M740.70 167V926M810.40 167V926M845.25 167V926M880.10 167V926M949.80 167V926M984.65 167V926M1019.50 167V926M1089.20 167V926M78 202.95H1124M78 237.80H1124M78 272.65H1124M78 342.35H1124M78 377.20H1124M78 412.05H1124M78 481.75H1124M78 516.60H1124M78 551.45H1124M78 621.15H1124M78 656.00H1124M78 690.85H1124M78 760.55H1124M78 795.40H1124M78 830.25H1124M78 899.95H1124" class="gmi"/>
<path d="M217.95 167V926M357.35 167V926M496.75 167V926M636.15 167V926M775.55 167V926M914.95 167V926M1054.35 167V926M78 307.50H1124M78 446.90H1124M78 586.30H1124M78 725.70H1124M78 865.10H1124" class="gma"/>

<rect x="96.4" y="188.4" width="489" height="158.9" fill="none" stroke="#00c4cc" stroke-width="2.8"/>
<path d="M98 268.4H584" stroke="#00c4cc" stroke-width="1.3" stroke-dasharray="1.5 2.2" fill="none"/>
<path d="M341.3 190V346.5" stroke="#00c4cc" stroke-width="1.3" stroke-dasharray="1.5 2.2" fill="none"/>
<rect x="295" y="350" width="91.8" height="26" fill="#00c4cc"/>
<text x="298.6" y="369.6" font-family="Liberation Sans, sans-serif" font-size="17" letter-spacing="1.45" fill="#fff">1396x448</text>
</g>
</svg>
<div id="abcbtn"></div>
<svg style="position:absolute;left:0;top:0;overflow:visible" width="700" height="56" viewBox="0 0 700 56">
<g font-family="Liberation Sans, sans-serif" font-size="15.5" fill="#fff" stroke="#fff" stroke-width=".35">
<text transform="translate(541.6 30.6) rotate(-14)">a</text>
<text transform="translate(549.6 28.8) rotate(0)">b</text>
<text transform="translate(558.6 29.2) rotate(13)">c</text>
</g>
<path d="M541 40Q554 30 567 40" fill="none" stroke="#fff" stroke-width="1.5"/>
<circle cx="566" cy="15.5" r="3" fill="#16c734"/>
<path d="M602.5 18H620.5" fill="none" stroke="#fff" stroke-width="2.2"/>
<path d="M613.2 18L608.6 34.6" fill="none" stroke="#fff" stroke-width="2.3"/>
<path d="M600 38H617" fill="none" stroke="#fff" stroke-width="1.8"/>
<path d="M596.3 38L602.3 34.2V41.8ZM620.7 38L614.7 34.2V41.8Z" fill="#fff"/>
</svg>
<div id="pop">
<div class="tg"><i></i></div>
<div class="l1">Enable curve</div>
<div class="l2">Curve radius:</div>
<div class="trk"></div><div class="fil"></div><div class="knb"></div>
<div class="note">(Curve does NOT work with<br>alignment, skew, or text<br>background)</div>
</div>
<div id="red"></div>

</body></html>
